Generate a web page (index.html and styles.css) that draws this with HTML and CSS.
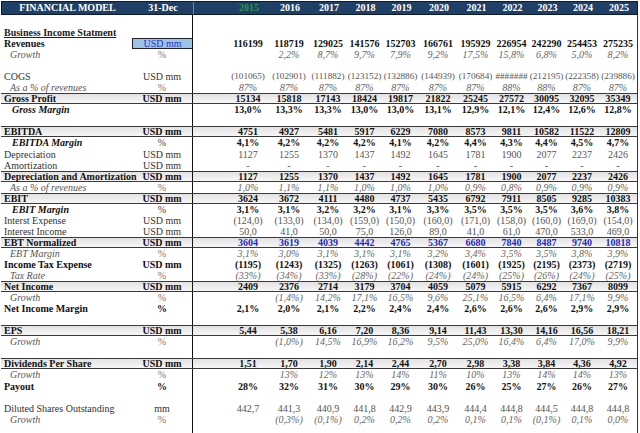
FILE: index.html
```html
<!DOCTYPE html>
<html>
<head>
<meta charset="utf-8">
<link rel="stylesheet" href="styles.css">
</head>
<body>
<div class="sheet">
  <div class="row hdr"><span class="lbl">FINANCIAL MODEL</span><span class="unit">31-Dec</span><span></span><span class="green">2015</span><span>2016</span><span>2017</span><span>2018</span><span>2019</span><span>2020</span><span>2021</span><span>2022</span><span>2023</span><span>2024</span><span>2025</span></div>
  <div class="row gap"><span></span><span class="unit"></span></div>

  <div class="row title"><span class="lbl"><u>Business Income Statment</u></span><span class="unit"></span></div>
  <div class="row b"><span class="lbl">Revenues</span><span class="unit inp">USD mm</span><span></span><span>116199</span><span>118719</span><span>129025</span><span>141576</span><span>152703</span><span>166761</span><span>195929</span><span>226954</span><span>242290</span><span>254453</span><span>275235</span></div>
  <div class="row it"><span class="lbl">Growth</span><span class="unit">%</span><span></span><span></span><span>2,2%</span><span>8,7%</span><span>9,7%</span><span>7,9%</span><span>9,2%</span><span>17,5%</span><span>15,8%</span><span>6,8%</span><span>5,0%</span><span>8,2%</span></div>
  <div class="row"><span></span><span class="unit"></span></div>
  <div class="row n tight"><span class="lbl">COGS</span><span class="unit">USD mm</span><span></span><span>(101065)</span><span>(102901)</span><span>(111882)</span><span>(123152)</span><span>(132886)</span><span>(144939)</span><span>(170684)</span><span>#######</span><span>(212195)</span><span>(222358)</span><span>(239886)</span></div>
  <div class="row it"><span class="lbl">As a % of revenues</span><span class="unit">%</span><span></span><span>87%</span><span>87%</span><span>87%</span><span>87%</span><span>87%</span><span>87%</span><span>87%</span><span>88%</span><span>88%</span><span>87%</span><span>87%</span></div>
  <div class="row sh"><span class="lbl">Gross Profit</span><span class="unit">USD mm</span><span></span><span>15134</span><span>15818</span><span>17143</span><span>18424</span><span>19817</span><span>21822</span><span>25245</span><span>27572</span><span>30095</span><span>32095</span><span>35349</span></div>
  <div class="row bi"><span class="lbl">Gross Margin</span><span class="unit"></span><span></span><span>13,0%</span><span>13,3%</span><span>13,3%</span><span>13,0%</span><span>13,0%</span><span>13,1%</span><span>12,9%</span><span>12,1%</span><span>12,4%</span><span>12,6%</span><span>12,8%</span></div>
  <div class="row"><span></span><span class="unit"></span></div>
  <div class="row sh"><span class="lbl">EBITDA</span><span class="unit">USD mm</span><span></span><span>4751</span><span>4927</span><span>5481</span><span>5917</span><span>6229</span><span>7080</span><span>8573</span><span>9811</span><span>10582</span><span>11522</span><span>12809</span></div>
  <div class="row bi"><span class="lbl">EBITDA Margin</span><span class="unit">%</span><span></span><span>4,1%</span><span>4,2%</span><span>4,2%</span><span>4,2%</span><span>4,1%</span><span>4,2%</span><span>4,4%</span><span>4,3%</span><span>4,4%</span><span>4,5%</span><span>4,7%</span></div>
  <div class="row n"><span class="lbl">Depreciation</span><span class="unit">USD mm</span><span></span><span>1127</span><span>1255</span><span>1370</span><span>1437</span><span>1492</span><span>1645</span><span>1781</span><span>1900</span><span>2077</span><span>2237</span><span>2426</span></div>
  <div class="row n"><span class="lbl">Amortization</span><span class="unit">USD mm</span><span></span><span>-</span><span>-</span><span>-</span><span>-</span><span>-</span><span>-</span><span>-</span><span>-</span><span>-</span><span>-</span><span>-</span></div>
  <div class="row sh"><span class="lbl">Depreciation and Amortization</span><span class="unit">USD mm</span><span></span><span>1127</span><span>1255</span><span>1370</span><span>1437</span><span>1492</span><span>1645</span><span>1781</span><span>1900</span><span>2077</span><span>2237</span><span>2426</span></div>
  <div class="row it"><span class="lbl">As a % of revenues</span><span class="unit">%</span><span></span><span>1,0%</span><span>1,1%</span><span>1,1%</span><span>1,0%</span><span>1,0%</span><span>1,0%</span><span>0,9%</span><span>0,8%</span><span>0,9%</span><span>0,9%</span><span>0,9%</span></div>
  <div class="row sh"><span class="lbl">EBIT</span><span class="unit">USD mm</span><span></span><span>3624</span><span>3672</span><span>4111</span><span>4480</span><span>4737</span><span>5435</span><span>6792</span><span>7911</span><span>8505</span><span>9285</span><span>10383</span></div>
  <div class="row bi"><span class="lbl">EBIT Margin</span><span class="unit">%</span><span></span><span>3,1%</span><span>3,1%</span><span>3,2%</span><span>3,2%</span><span>3,1%</span><span>3,3%</span><span>3,5%</span><span>3,5%</span><span>3,5%</span><span>3,6%</span><span>3,8%</span></div>
  <div class="row n"><span class="lbl">Interst Expense</span><span class="unit">USD mm</span><span></span><span>(124,0)</span><span>(133,0)</span><span>(134,0)</span><span>(159,0)</span><span>(150,0)</span><span>(160,0)</span><span>(171,0)</span><span>(158,0)</span><span>(160,0)</span><span>(169,0)</span><span>(154,0)</span></div>
  <div class="row n"><span class="lbl">Interest Income</span><span class="unit">USD mm</span><span></span><span>50,0</span><span>41,0</span><span>50,0</span><span>75,0</span><span>126,0</span><span>89,0</span><span>41,0</span><span>61,0</span><span>470,0</span><span>533,0</span><span>469,0</span></div>
  <div class="row sh blue"><span class="lbl">EBT Normalized</span><span class="unit">USD mm</span><span></span><span>3604</span><span>3619</span><span>4039</span><span>4442</span><span>4765</span><span>5367</span><span>6680</span><span>7840</span><span>8487</span><span>9740</span><span>10818</span></div>
  <div class="row it"><span class="lbl">EBT Margin</span><span class="unit">%</span><span></span><span>3,1%</span><span>3,0%</span><span>3,1%</span><span>3,1%</span><span>3,1%</span><span>3,2%</span><span>3,4%</span><span>3,5%</span><span>3,5%</span><span>3,8%</span><span>3,9%</span></div>
  <div class="row b"><span class="lbl">Income Tax Expense</span><span class="unit">USD mm</span><span></span><span>(1195)</span><span>(1243)</span><span>(1325)</span><span>(1263)</span><span>(1061)</span><span>(1308)</span><span>(1601)</span><span>(1925)</span><span>(2195)</span><span>(2373)</span><span>(2719)</span></div>
  <div class="row it"><span class="lbl">Tax Rate</span><span class="unit">%</span><span></span><span>(33%)</span><span>(34%)</span><span>(33%)</span><span>(28%)</span><span>(22%)</span><span>(24%)</span><span>(24%)</span><span>(25%)</span><span>(26%)</span><span>(24%)</span><span>(25%)</span></div>
  <div class="row sh"><span class="lbl">Net Income</span><span class="unit">USD mm</span><span></span><span>2409</span><span>2376</span><span>2714</span><span>3179</span><span>3704</span><span>4059</span><span>5079</span><span>5915</span><span>6292</span><span>7367</span><span>8099</span></div>
  <div class="row it"><span class="lbl">Growth</span><span class="unit">%</span><span></span><span></span><span>(1,4%)</span><span>14,2%</span><span>17,1%</span><span>16,5%</span><span>9,6%</span><span>25,1%</span><span>16,5%</span><span>6,4%</span><span>17,1%</span><span>9,9%</span></div>
  <div class="row b"><span class="lbl">Net Income Margin</span><span class="unit">%</span><span></span><span>2,1%</span><span>2,0%</span><span>2,1%</span><span>2,2%</span><span>2,4%</span><span>2,4%</span><span>2,6%</span><span>2,6%</span><span>2,6%</span><span>2,9%</span><span>2,9%</span></div>
  <div class="row"><span></span><span class="unit"></span></div>
  <div class="row sh"><span class="lbl">EPS</span><span class="unit">USD mm</span><span></span><span>5,44</span><span>5,38</span><span>6,16</span><span>7,20</span><span>8,36</span><span>9,14</span><span>11,43</span><span>13,30</span><span>14,16</span><span>16,56</span><span>18,21</span></div>
  <div class="row it"><span class="lbl">Growth</span><span class="unit">%</span><span></span><span></span><span>(1,0%)</span><span>14,5%</span><span>16,9%</span><span>16,2%</span><span>9,5%</span><span>25,0%</span><span>16,4%</span><span>6,4%</span><span>17,0%</span><span>9,9%</span></div>
  <div class="row"><span></span><span class="unit"></span></div>
  <div class="row sh"><span class="lbl">Dividends Per Share</span><span class="unit">USD mm</span><span></span><span>1,51</span><span>1,70</span><span>1,90</span><span>2,14</span><span>2,44</span><span>2,70</span><span>2,98</span><span>3,38</span><span>3,84</span><span>4,36</span><span>4,92</span></div>
  <div class="row it"><span class="lbl">Growth</span><span class="unit">%</span><span></span><span></span><span>13%</span><span>12%</span><span>13%</span><span>14%</span><span>11%</span><span>10%</span><span>13%</span><span>14%</span><span>14%</span><span>13%</span></div>
  <div class="row b"><span class="lbl">Payout</span><span class="unit">%</span><span></span><span>28%</span><span>32%</span><span>31%</span><span>30%</span><span>29%</span><span>30%</span><span>26%</span><span>25%</span><span>27%</span><span>26%</span><span>27%</span></div>
  <div class="row"><span></span><span class="unit"></span></div>
  <div class="row n"><span class="lbl">Diluted Shares Outstanding</span><span class="unit">mm</span><span></span><span>442,7</span><span>441,3</span><span>440,9</span><span>441,8</span><span>442,9</span><span>443,9</span><span>444,4</span><span>444,8</span><span>444,5</span><span>444,8</span><span>444,8</span></div>
  <div class="row it"><span class="lbl">Growth</span><span class="unit">%</span><span></span><span></span><span>(0,3%)</span><span>(0,1%)</span><span>0,2%</span><span>0,2%</span><span>0,2%</span><span>0,1%</span><span>0,1%</span><span>(0,1%)</span><span>0,1%</span><span>0,0%</span></div>
  <div class="row tail"><span></span><span class="unit"></span></div>
</div>
</body>
</html>
```

FILE: styles.css
```css
html, body {
  margin: 0;
  padding: 0;
  background: #ffffff;
}

body {
  font-family: "Liberation Serif", "Times New Roman", serif;
  font-size: 10px;
  color: #222222;
}

.sheet {
  width: 637px;
  padding: 1px 0 0 1px;
}

.row {
  display: grid;
  grid-template-columns: 131px 61px 34px 42px 40px 38px 35px 37px 38px 37px 35px 35px 36px 36px;
  height: 11.06px;
  line-height: 11px;
  box-sizing: border-box;
  border-right: 1px solid #333333;
  white-space: nowrap;
}

.row > span {
  text-align: center;
  overflow: visible;
}

.row > .lbl {
  text-align: left;
  padding-left: 3px;
}

.row > .unit {
  border-right: 1px solid #111111;
}

/* header bar */
.hdr {
  height: 14px;
  line-height: 12px;
  background: #1f3f66;
  border: 1px solid #0b1b30;
  color: #ffffff;
  font-weight: bold;
}

.hdr > .lbl {
  text-align: center;
  padding-left: 0;
}

.hdr > .unit {
  border-right: 1px solid #6f87a8;
}

.hdr .green {
  color: #2a9a4a;
}

.gap {
  height: 12px;
}

.tail {
  height: 12px;
}

.title {
  font-weight: bold;
}

/* bold rows */
.b {
  font-weight: bold;
  color: #111111;
}

/* normal rows */
.n > .lbl,
.n > .unit {
  color: #333333;
}

.n > span {
  color: #555555;
}

.tight > span:not(.lbl):not(.unit) {
  font-size: 9.2px;
}

/* italic grey rows */
.it {
  font-style: italic;
  color: #666666;
}

.it > .lbl {
  padding-left: 9px;
  color: #555555;
}

.it > .unit {
  font-style: normal;
  color: #777777;
}

/* bold italic margin rows */
.bi {
  font-weight: bold;
  color: #111111;
}

.bi > .lbl {
  font-style: italic;
  padding-left: 11px;
}

.bi > .unit {
  font-weight: normal;
  color: #444444;
}

/* shaded subtotal rows */
.sh {
  font-weight: bold;
  color: #111111;
  background: linear-gradient(to bottom, #e2e2e2, #f6f6f6);
  border-top: 1px solid #3a3a3a;
  border-bottom: 1px solid #3a3a3a;
  line-height: 9px;
}

.blue > span {
  color: #2626c8;
}

.blue > .lbl,
.blue > .unit {
  color: #111111;
}

/* blue input cell */
.inp {
  background: #9dc3e6;
  border: 1px solid #222222;
  color: #2436c8;
  line-height: 9px;
  font-weight: normal;
}
```
